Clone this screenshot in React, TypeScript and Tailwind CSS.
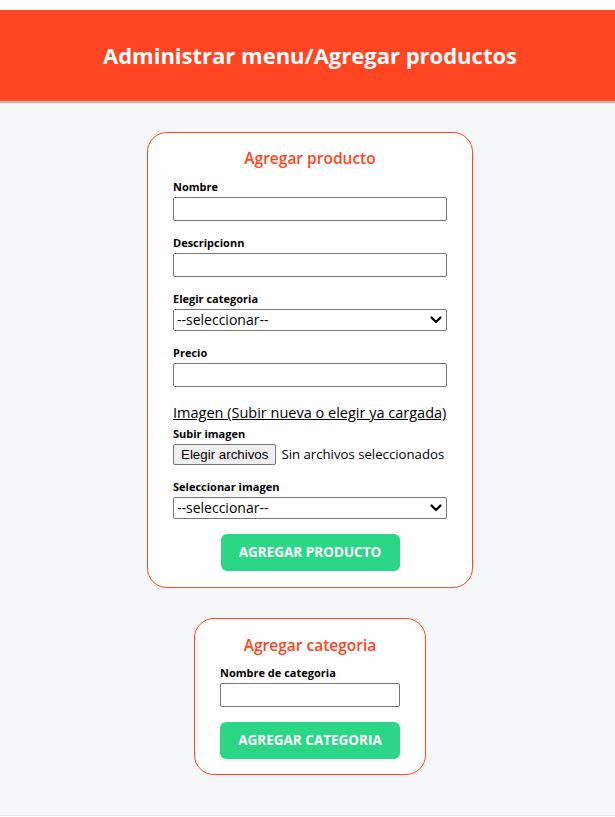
import React from "react";

const font = { fontFamily: "'Open Sans', Lato, sans-serif" };

function Chevron() {
  return (
    <svg width="12" height="8" viewBox="0 0 12 8" className="pointer-events-none absolute right-[5px] top-1/2 -translate-y-1/2">
      <path d="M1.5 1.5 L6 6 L10.5 1.5" fill="none" stroke="#000" strokeWidth="2.2" strokeLinecap="round" strokeLinejoin="round" />
    </svg>
  );
}

function Label({ children }: { children: React.ReactNode }) {
  return <label className="block text-[11px] font-bold leading-[14px] text-black mb-[3px]">{children}</label>;
}

function TextInput() {
  return <input type="text" className="block w-full h-[24px] border border-[#767676] rounded-[2px] bg-white px-1 text-[13px] outline-none" />;
}

function Select() {
  return (
    <div className="relative w-full">
      <select className="block w-full h-[22px] appearance-none border border-[#767676] rounded-[2px] bg-white pl-[3px] text-[14px] leading-[20px] text-black outline-none">
        <option>--seleccionar--</option>
      </select>
      <Chevron />
    </div>
  );
}

export default function App() {
  return (
    <div className="min-h-[817px] bg-white pt-[10px]" style={font}>
      <header className="h-[91px] bg-[#ff4521] flex items-center justify-center shadow-[0_2px_1px_rgba(0,0,0,0.25)] relative z-10 pl-[5px]">
        <h1 className="text-white text-[22px] font-bold">Administrar menu/Agregar productos</h1>
      </header>
      <main className="bg-[#f5f6f8] pt-[31px] pb-[40px] pl-[5px] border-b border-[#e3e5e8] flex flex-col items-center">
        <div className="w-[326px] bg-white border border-[#ff4521] rounded-[20px] pt-[15px] pb-[16px] px-[25px]">
          <h2 className="text-center text-[#ff4521] text-[15.5px] font-semibold leading-[20px] mb-[12px]">Agregar producto</h2>
          <Label>Nombre</Label>
          <TextInput />
          <div className="h-[15px]" />
          <Label>Descripcionn</Label>
          <TextInput />
          <div className="h-[15px]" />
          <Label>Elegir categoria</Label>
          <Select />
          <div className="h-[15px]" />
          <Label>Precio</Label>
          <TextInput />
          <div className="h-[15px]" />
          <h3 className="text-[14.5px] font-medium leading-[19px] underline text-black mt-[1px] mb-[5px] whitespace-nowrap">Imagen (Subir nueva o elegir ya cargada)</h3>
          <Label>Subir imagen</Label>
          <div className="flex items-center h-[21px]">
            <span className="shrink-0 whitespace-nowrap h-[21px] px-[7px] flex items-center bg-[#efefef] border border-[#767676] rounded-[2px] text-[13.33px] text-black" style={{ fontFamily: "'Liberation Sans', Arial, sans-serif" }}>Elegir archivos</span>
            <span className="ml-[5px] text-[13.2px] text-black whitespace-nowrap">Sin archivos seleccionados</span>
          </div>
          <div className="h-[15px]" />
          <Label>Seleccionar imagen</Label>
          <Select />
          <div className="h-[15px]" />
          <div className="flex justify-center">
            <button className="w-[179px] h-[37px] bg-[#2bd687] rounded-[6px] text-white text-[13.5px] font-bold">AGREGAR PRODUCTO</button>
          </div>
        </div>
        <div className="mt-[30px] w-[232px] bg-white border border-[#ff4521] rounded-[20px] pt-[16px] pb-[15px] px-[25px]">
          <h2 className="text-center text-[#ff4521] text-[15.5px] font-semibold leading-[20px] mb-[11px]">Agregar categoria</h2>
          <Label>Nombre de categoria</Label>
          <TextInput />
          <div className="h-[15px]" />
          <button className="w-full h-[37px] bg-[#2bd687] rounded-[6px] text-white text-[13.5px] font-bold">AGREGAR CATEGORIA</button>
        </div>
      </main>
    </div>
  );
}
